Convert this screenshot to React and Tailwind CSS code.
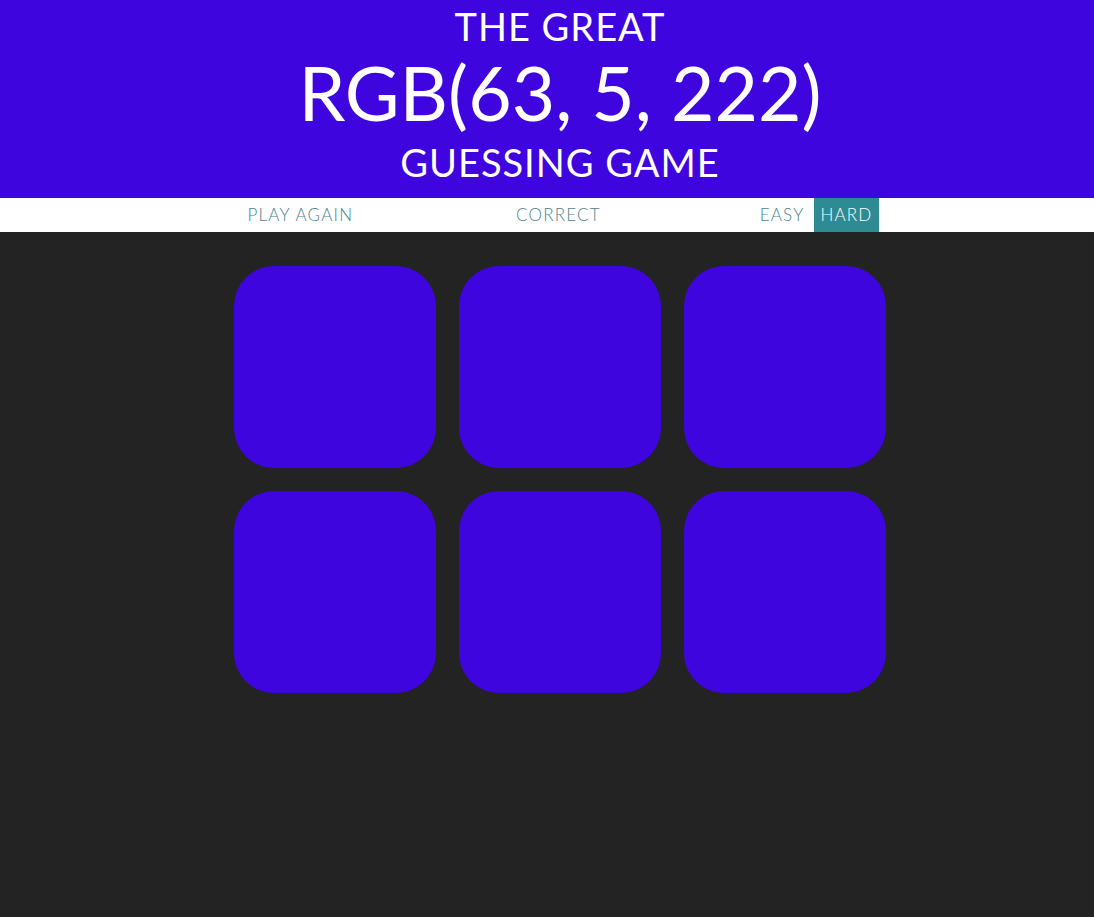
export default function App() {
  const squares = [0, 1, 2, 3, 4, 5];
  return (
    <div className="min-h-[917px] bg-[#232323]" style={{ fontFamily: "Lato, 'Open Sans', sans-serif" }}>
      <div className="h-[198px] bg-[#3f05de] text-white flex flex-col items-center pl-[26px]">
        <div className="text-[38px] leading-none mt-[7px] tracking-[1px]">THE GREAT</div>
        <div className="text-[75px] leading-none mt-[10px]">RGB(63, 5, 222)</div>
        <div className="text-[38px] leading-none mt-[13px] tracking-[1px]">GUESSING GAME</div>
      </div>
      <div className="h-[34px] bg-white flex justify-center pl-[32px]">
        <div className="w-[631px] flex items-stretch text-[17px] font-light text-[#4a8389] tracking-[1.2px]">
          <button className="px-0 uppercase">Play Again</button>
          <span className="flex-1 flex items-center justify-center pl-[10px]">CORRECT</span>
          <button className="px-[6px] uppercase">Easy</button>
          <button className="px-[6px] ml-[4px] uppercase bg-[#2e8b93] text-white">Hard</button>
        </div>
      </div>
      <div className="flex justify-center pl-[26px] pt-[34px]">
        <div className="grid grid-cols-[202px_202px_202px] gap-[23px]">
          {squares.map((i) => (
            <div key={i} className="w-[202px] h-[202px] rounded-[40px] bg-[#3f05de]" />
          ))}
        </div>
      </div>
    </div>
  );
}
